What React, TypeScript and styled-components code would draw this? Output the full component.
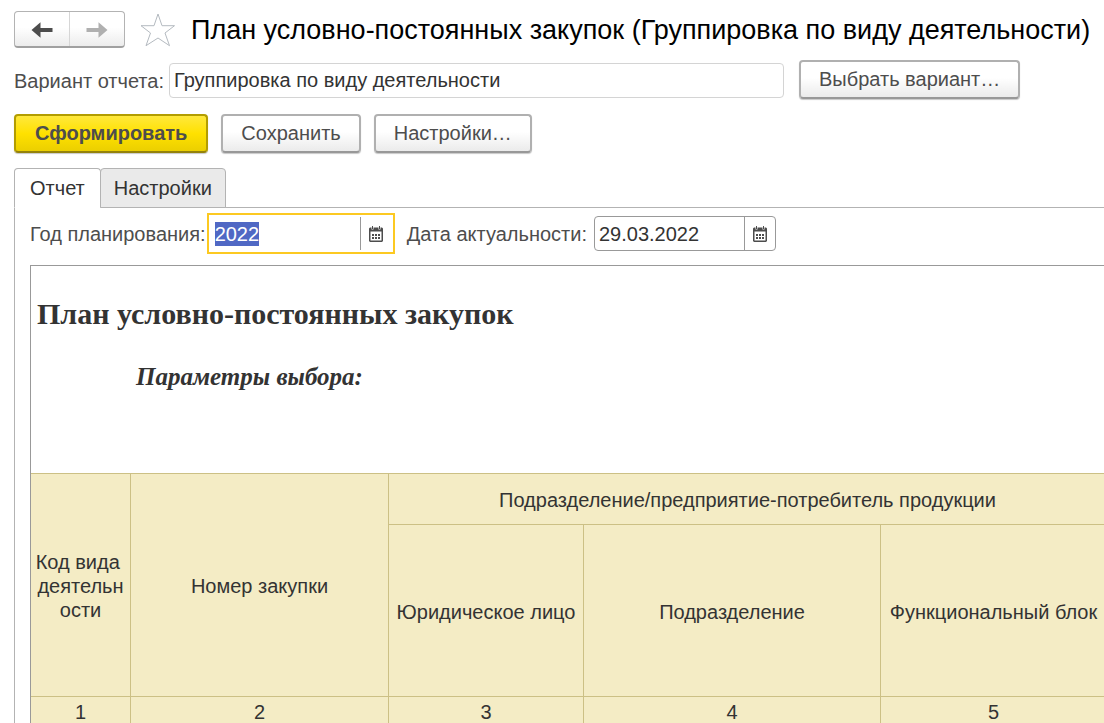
import React, { useEffect, useRef } from "react";
import styled, { createGlobalStyle, css } from "styled-components";

const GlobalStyle = createGlobalStyle`
  * { box-sizing: border-box; }
  body {
    margin: 0;
    background: #fff;
    color: #4d4d4d;
    font: 20px/24px "Liberation Sans", Arial, sans-serif;
  }
  button, input { font: inherit; }
`;

const Page = styled.main`
  display: flex;
  flex-direction: column;
  height: 100vh;
  padding: 11px 0 0 14px;
  overflow: hidden;
`;

const TitleBar = styled.header`
  display: flex;
  align-items: center;
  height: 37px;
`;

const NavGroup = styled.div`
  display: flex;
  flex: none;
  width: 111px;
  height: 37px;
  border: 1px solid #b3b3b3;
  border-bottom: 2px solid #a0a0a0;
  border-radius: 4px;
  background: linear-gradient(#fff 45%, #ececec);
`;

const NavButton = styled.button`
  display: flex;
  flex: 1;
  align-items: center;
  justify-content: center;
  padding: 2px 0 0;
  border: 0;
  background: none;
  color: #4d4d4d;

  & + & { border-left: 1px solid #d6d6d6; }
  &:disabled { color: #b0b0b0; }
`;

const StarButton = styled.button`
  flex: none;
  width: 36px;
  height: 36px;
  margin: 0 15px;
  padding: 0;
  border: 0;
  background: none;
  svg { display: block; }
`;

const Title = styled.h1`
  margin: 0;
  color: #000;
  font-size: 27px;
  font-weight: 400;
  line-height: 36px;
  white-space: nowrap;
`;

const VariantRow = styled.div`
  display: flex;
  align-items: center;
  gap: 15px;
  margin-top: 12px;
`;

const VariantField = styled.label`
  display: flex;
  flex: 0 1 770px;
  align-items: center;
  gap: 5px;
  min-width: 0;
  padding-top: 2px;
  white-space: nowrap;
`;

const VariantInput = styled.input`
  flex: 1;
  min-width: 0;
  height: 35px;
  padding: 0 4px;
  border: 1px solid #d4d4d4;
  border-radius: 4px;
  outline: 0;
  color: #333;
`;

const Commands = styled.div`
  display: flex;
  gap: 13px;
  margin-top: 15px;
`;

const Command = styled.button<{ $primary?: boolean }>`
  flex: none;
  height: 39px;
  padding: 0 18px 2px;
  border: 2px solid #b0b0b0;
  border-bottom-color: #989898;
  border-radius: 4px;
  background: linear-gradient(#fff 45%, #ebebeb);
  box-shadow: 0 1px 1px #c8c8c8;
  color: #4d4d4d;
  line-height: 24px;
  white-space: nowrap;

  ${(p) => p.$primary && css`
    padding: 0 19px 2px;
    border-color: #b39d00;
    border-bottom-color: #94820a;
    background: linear-gradient(#ffe83c, #ffe100 50%, #ebcf00);
    font-weight: 700;
  `}
`;

const Tabs = styled.div`
  display: flex;
  margin-top: 15px;
  height: 40px;
  border-bottom: 1px solid #b3b3b3;
`;

const Tab = styled.button<{ $active?: boolean }>`
  height: 40px;
  padding: 0 15px;
  border: 1px solid #b3b3b3;
  border-radius: 4px 4px 0 0;
  background: #eaeaea;
  color: #333;

  & + & {
    margin-left: -1px;
    padding: 0 13px;
  }
  ${(p) => p.$active && css`
    border-bottom-color: #fff;
    background: #fff;
  `}
`;

const Panel = styled.section`
  display: flex;
  flex: 1;
  flex-direction: column;
  min-height: 0;
  padding: 5px 0 0 15px;
  border-left: 1px solid #b3b3b3;
`;

const Filters = styled.div`
  display: flex;
  align-items: center;
  height: 41px;
  gap: 12px;
`;

const Filter = styled.div<{ $gap: number }>`
  display: flex;
  align-items: center;
  gap: ${(p) => p.$gap}px;
  white-space: nowrap;
`;

const DateBox = styled.div<{ $focused?: boolean }>`
  display: flex;
  align-items: stretch;
  width: 182px;
  height: 35px;
  border: 1px solid #999;
  border-radius: 4px;

  ${(p) => p.$focused && css`
    width: 188px;
    height: 41px;
    padding: 2px;
    border: 2px solid #fcc921;
    border-radius: 0;
  `}
`;

const DateInput = styled.input`
  flex: 1;
  min-width: 0;
  padding: 0 4px;
  border: 0;
  outline: 0;
  background: none;
  color: #333;

  &::selection {
    background: #5068c4;
    color: #fff;
  }
`;

const CalendarButton = styled.button`
  display: flex;
  flex: none;
  align-items: center;
  justify-content: center;
  width: 31px;
  padding: 0;
  border: 0;
  border-left: 1px solid #999;
  background: none;
`;

const Sheet = styled.article`
  flex: 1;
  min-height: 0;
  margin-top: 11px;
  overflow: hidden;
  border: solid #999;
  border-width: 1px 0 0 1px;
  color: #333;
`;

const SheetHead = styled.div`
  height: 207px;
  padding: 32px 6px 0;
  font-family: "Liberation Serif", "Times New Roman", serif;
  font-weight: 700;
`;

const SheetTitle = styled.h2`
  margin: 0;
  font-size: 30px;
  line-height: 32px;
`;

const SheetSubtitle = styled.h3`
  margin: 33px 0 0 99px;
  font-size: 25px;
  font-style: italic;
  line-height: 28px;
`;

const Table = styled.table`
  width: 1076px;
  table-layout: fixed;
  border-collapse: separate;
  border-spacing: 0;
  border-top: 1px solid #ccc085;
  background: #f4ecc5;
`;

const Col = styled.col<{ $width: number }>`
  width: ${(p) => p.$width}px;
`;

const Row = styled.tr<{ $height: number }>`
  height: ${(p) => p.$height}px;
`;

const cellStyle = css`
  padding: 2px 2px 0;
  border: solid #ccc085;
  border-width: 0 1px 1px 0;
  font-weight: 400;
  text-align: center;
  vertical-align: middle;
`;

const HeadCell = styled.th`
  ${cellStyle}
`;

const Cell = styled.td`
  ${cellStyle}
`;

const Arrow = ({ flip }: { flip?: boolean }) => (
  <svg width="22" height="16" viewBox="0 0 22 16" aria-hidden="true">
    <path
      d="M0.5 8 9.5 .3V6H21.5V10H9.5V15.7Z"
      fill="currentColor"
      transform={flip ? "matrix(-1 0 0 1 22 0)" : undefined}
    />
  </svg>
);

const Star = () => (
  <svg width="36" height="36" viewBox="0 0 36 36" aria-hidden="true">
    <path
      d="M18 2 22 13.7H34.5L25 21 29.5 33.7 18 26 6 33.7 10.5 21 1 13.7H14Z"
      fill="#fff"
      stroke="#b4bac0"
    />
  </svg>
);

const CalendarIcon = () => (
  <svg width="14" height="16" viewBox="0 0 14 16" aria-hidden="true">
    <path
      fill="#4d4d4d"
      fillRule="evenodd"
      d="M1 1.5H2.5V3.5H4.5V1.5H9.5V3.5H11.5V1.5H13L14 2.5V15L13 16H1L0 15V2.5ZM1.5 5.5V14.5H12.5V5.5Z"
    />
    <path
      fill="#4d4d4d"
      d="M3 0h1v3H3zM10 0h1v3h-1zM3 8h2v2H3zM6 8h2v2H6zM9 8h2v2H9zM3 11h2v2H3zM6 11h2v2H6zM9 11h2v2H9z"
    />
  </svg>
);

const columnWidths = [100, 258, 195, 297, 226];

export default function App() {
  const yearRef = useRef<HTMLInputElement>(null);

  useEffect(() => {
    yearRef.current?.focus();
    yearRef.current?.select();
  }, []);

  return (
    <>
      <GlobalStyle />
      <Page>
        <TitleBar>
          <NavGroup>
            <NavButton type="button" aria-label="Назад"><Arrow /></NavButton>
            <NavButton type="button" aria-label="Вперед" disabled><Arrow flip /></NavButton>
          </NavGroup>
          <StarButton type="button" aria-label="Избранное"><Star /></StarButton>
          <Title>План условно-постоянных закупок (Группировка по виду деятельности)</Title>
        </TitleBar>

        <VariantRow>
          <VariantField>
            Вариант отчета:
            <VariantInput defaultValue="Группировка по виду деятельности" />
          </VariantField>
          <Command type="button">Выбрать вариант…</Command>
        </VariantRow>

        <Commands>
          <Command type="button" $primary>Сформировать</Command>
          <Command type="button">Сохранить</Command>
          <Command type="button">Настройки…</Command>
        </Commands>

        <Tabs role="tablist">
          <Tab type="button" role="tab" aria-selected="true" $active>Отчет</Tab>
          <Tab type="button" role="tab" aria-selected="false">Настройки</Tab>
        </Tabs>

        <Panel role="tabpanel">
          <Filters>
            <Filter $gap={1}>
              <label htmlFor="year">Год планирования:</label>
              <DateBox $focused>
                <DateInput id="year" ref={yearRef} defaultValue="2022" />
                <CalendarButton type="button" aria-label="Выбрать год"><CalendarIcon /></CalendarButton>
              </DateBox>
            </Filter>
            <Filter $gap={7}>
              <label htmlFor="date">Дата актуальности:</label>
              <DateBox>
                <DateInput id="date" defaultValue="29.03.2022" />
                <CalendarButton type="button" aria-label="Выбрать дату"><CalendarIcon /></CalendarButton>
              </DateBox>
            </Filter>
          </Filters>

          <Sheet>
            <SheetHead>
              <SheetTitle>План условно-постоянных закупок</SheetTitle>
              <SheetSubtitle>Параметры выбора:</SheetSubtitle>
            </SheetHead>
            <Table>
              <colgroup>
                {columnWidths.map((width, i) => <Col key={i} $width={width} />)}
              </colgroup>
              <thead>
                <Row $height={51}>
                  <HeadCell rowSpan={2}>Код вида&nbsp;<br />деятельн<br />ости</HeadCell>
                  <HeadCell rowSpan={2}>Номер закупки</HeadCell>
                  <HeadCell colSpan={3}>Подразделение/предприятие-потребитель продукции</HeadCell>
                </Row>
                <Row $height={172}>
                  <HeadCell>Юридическое лицо</HeadCell>
                  <HeadCell>Подразделение</HeadCell>
                  <HeadCell>Функциональный блок</HeadCell>
                </Row>
              </thead>
              <tbody>
                <Row $height={28}>
                  {columnWidths.map((_, i) => <Cell key={i}>{i + 1}</Cell>)}
                </Row>
              </tbody>
            </Table>
          </Sheet>
        </Panel>
      </Page>
    </>
  );
}
